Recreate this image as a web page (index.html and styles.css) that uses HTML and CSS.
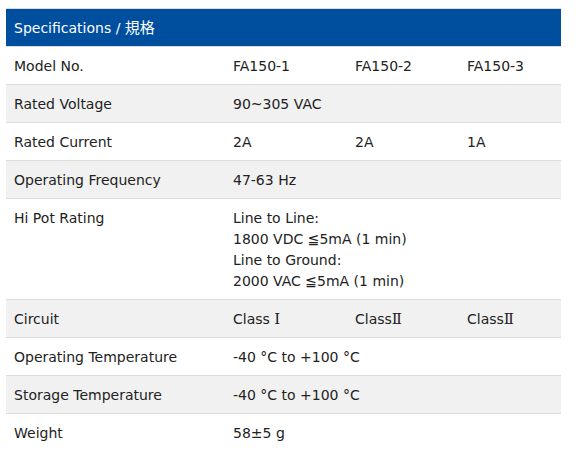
FILE: index.html
```html
<!DOCTYPE html>
<html>
<head>
<meta charset="utf-8">
<link rel="stylesheet" href="styles.css">
</head>
<body>
<div class="spec">
  <div class="head">Specifications / <span class="cjk">規格</span></div>
  <div class="row">
    <div class="label">Model No.</div>
    <div class="val">FA150-1</div>
    <div class="val">FA150-2</div>
    <div class="val">FA150-3</div>
  </div>
  <div class="row alt">
    <div class="label">Rated Voltage</div>
    <div class="val span">90~305 VAC</div>
  </div>
  <div class="row">
    <div class="label">Rated Current</div>
    <div class="val">2A</div>
    <div class="val">2A</div>
    <div class="val">1A</div>
  </div>
  <div class="row alt">
    <div class="label">Operating Frequency</div>
    <div class="val span">47-63 Hz</div>
  </div>
  <div class="row">
    <div class="label">Hi Pot Rating</div>
    <div class="val span">Line to Line:<br>1800 VDC ≦5mA (1 min)<br>Line to Ground:<br>2000 VAC ≦5mA (1 min)</div>
  </div>
  <div class="row alt">
    <div class="label">Circuit</div>
    <div class="val">Class <span class="num">Ⅰ</span></div>
    <div class="val">Class<span class="num">Ⅱ</span></div>
    <div class="val">Class<span class="num">Ⅱ</span></div>
  </div>
  <div class="row">
    <div class="label">Operating Temperature</div>
    <div class="val span">-40 °C to +100 °C</div>
  </div>
  <div class="row alt">
    <div class="label">Storage Temperature</div>
    <div class="val span">-40 °C to +100 °C</div>
  </div>
  <div class="row last">
    <div class="label">Weight</div>
    <div class="val span">58±5 g</div>
  </div>
</div>
</body>
</html>
```
FILE: styles.css
```css
html, body {
  margin: 0;
  padding: 0;
  background: #fff;
}
body {
  padding: 8px 15px 0 6px;
  font-family: "DejaVu Sans", Verdana, sans-serif;
  font-size: 14px;
  color: #222;
}
.spec {
  width: 555px;
  border-top: 1px solid #dcdcdc;
}
.head {
  background: #004f9f;
  color: #fff;
  height: 36px;
  line-height: 36px;
  padding: 1px 0 0 8px;
  font-size: 14px;
}
.cjk {
  font-family: "Noto Sans CJK JP", sans-serif;
  font-size: 15px;
  line-height: 0;
}
.num {
  font-family: "DejaVu Serif", serif;
  font-size: 15px;
  line-height: 0;
}
.row {
  display: grid;
  grid-template-columns: 219px 122px 112px 102px;
  border-top: 1px solid #dcdcdc;
  line-height: 21px;
}
.row.alt {
  background: #f1f1f1;
}
.label, .val {
  padding: 9px 0 7px 8px;
}
.val.span {
  grid-column: 2 / 5;
}
```
